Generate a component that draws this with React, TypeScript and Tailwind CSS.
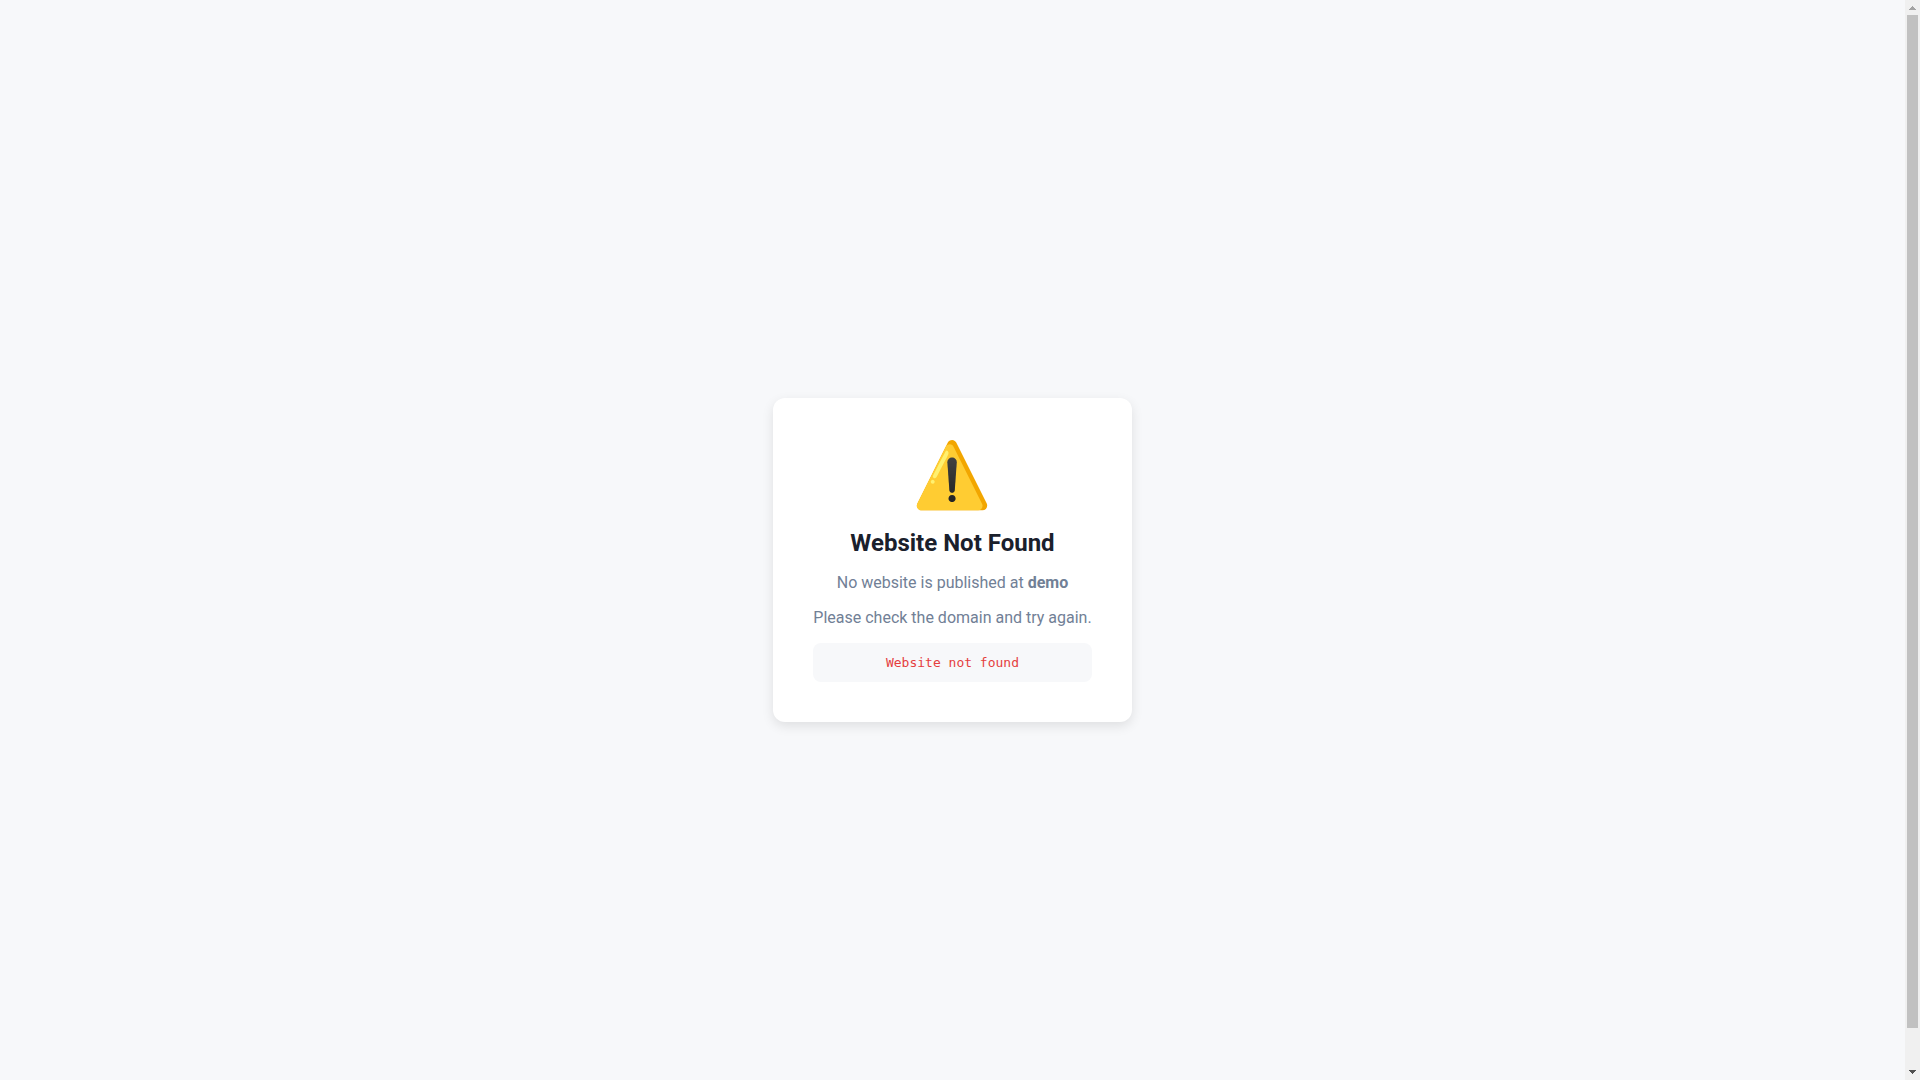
import React, { useRef } from "react";

interface SiteErrorProps {
  domain: string;
  message: string;
}

const SiteError: React.FC<SiteErrorProps> = ({ domain, message }) => {
  return (
    <div className="rounded-xl bg-white p-10 text-center shadow-[0_4px_12px_rgba(0,0,0,0.1)]">
      <div role="img" aria-label="Warning" className="mb-4 text-[64px] leading-[75px]">
        ⚠️
      </div>
      <h1 className="mb-4 text-2xl leading-7 font-bold text-[#1a202c]">Website Not Found</h1>
      <p className="mb-4 leading-[19px]">
        No website is published at <strong>{domain}</strong>
      </p>
      <p className="mb-4 leading-[19px]">Please check the domain and try again.</p>
      <div className="rounded-lg bg-[#f7f8fa] p-3 font-['DejaVu_Sans_Mono',monospace] text-[13px] leading-[15px] text-[#e53e3e]">
        {message}
      </div>
    </div>
  );
};

interface ScrollRailProps {
  onScroll: (amount: number) => void;
}

const ScrollRail: React.FC<ScrollRailProps> = ({ onScroll }) => {
  return (
    <div className="flex w-[15px] shrink-0 flex-col bg-[#f0f0f0]">
      <button
        type="button"
        aria-label="Scroll up"
        onClick={() => onScroll(-40)}
        className="flex h-[15px] items-center justify-center text-[#a3a3a3]"
      >
        <svg width="7" height="4" viewBox="0 0 7 4" fill="currentColor" shapeRendering="crispEdges">
          <path d="M3 0h1v1h1v1h1v1h1v1H0V3h1V2h1V1h1z" />
        </svg>
      </button>
      <div className="flex-1">
        {/* the viewport is 27/28 of the scrolled height */}
        <div className="mx-auto h-27/28 w-[11px] bg-[#c1c1c1]" />
      </div>
      <button
        type="button"
        aria-label="Scroll down"
        onClick={() => onScroll(40)}
        className="flex h-[15px] items-center justify-center pb-px text-[#505050]"
      >
        <svg width="7" height="4" viewBox="0 0 7 4" fill="currentColor" shapeRendering="crispEdges">
          <path d="M0 0h7v1H6v1H5v1H4v1H3V3H2V2H1V1H0z" />
        </svg>
      </button>
    </div>
  );
};

export default function App() {
  const viewRef = useRef<HTMLElement>(null);

  const handleScroll = (amount: number) => {
    viewRef.current?.scrollBy({ top: amount });
  };

  return (
    <div className="flex h-screen bg-[#f7f8fa]">
      <main ref={viewRef} className="flex-1 overflow-y-auto [scrollbar-width:none]">
        <div className="box-content flex min-h-full items-center justify-center py-5 font-[Roboto,sans-serif] text-base text-[#718096]">
          <SiteError domain="demo" message="Website not found" />
        </div>
      </main>
      <ScrollRail onScroll={handleScroll} />
    </div>
  );
}
